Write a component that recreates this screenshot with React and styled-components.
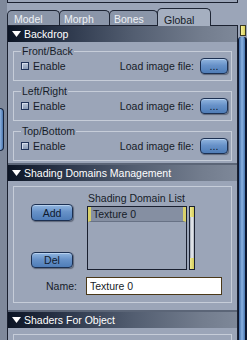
import React from "react";
import styled, { createGlobalStyle } from "styled-components";

const GlobalStyle = createGlobalStyle`
  html, body {
    margin: 0;
    padding: 0;
  }
  body {
    width: 247px;
    height: 340px;
    overflow: hidden;
    background: #9ba5b8;
    font-family: "Liberation Sans", Arial, sans-serif;
    font-size: 10.5px;
    color: #161c28;
  }
`;

const Window = styled.div`
  display: flex;
  width: 247px;
  height: 340px;
  overflow: hidden;
`;

const LeftStrip = styled.div`
  width: 7px;
  flex: none;
  background: #7f899b;
  display: flex;
  flex-direction: column;
`;

const SideHandle = styled.div`
  margin-top: 108px;
  width: 3px;
  height: 41px;
  background: linear-gradient(to right, #8fb3e0, #4a76ae);
  border: 1px solid #15233d;
  border-left: none;
  border-radius: 0 4px 4px 0;
`;

const Main = styled.div`
  flex: 1;
  min-width: 0;
  display: flex;
  flex-direction: column;
`;

const TopStrip = styled.div`
  width: 229px;
  height: 2px;
  flex: none;
  border: 1px solid #1b2130;
  border-top: none;
`;

const TabRow = styled.div`
  height: 22px;
  flex: none;
  display: flex;
  align-items: flex-end;
`;

const Tab = styled.div`
  box-sizing: border-box;
  width: ${(p) => p.$w}px;
  height: ${(p) => (p.$active ? 18 : 15)}px;
  margin-bottom: ${(p) => (p.$active ? -1 : 0)}px;
  margin-left: ${(p) => (p.$first ? 0 : -1)}px;
  padding: ${(p) => (p.$active ? 5 : 2)}px 0 0 ${(p) => p.$pad}px;
  line-height: 12px;
  border: 1px solid #1e2534;
  border-bottom: none;
  border-radius: 5px 5px 0 0;
  background: ${(p) => (p.$active ? "#a5afc0" : "#8b96a9")};
  color: ${(p) => (p.$active ? "#151b26" : "#eef1f5")};
  position: relative;
  z-index: ${(p) => (p.$active ? 2 : 1)};
`;

const Body = styled.div`
  flex: 1;
  display: flex;
  min-height: 0;
`;

const Panel = styled.div`
  width: 231px;
  flex: none;
  box-sizing: border-box;
  border: 1px solid #1b2130;
  border-bottom: none;
  display: flex;
  flex-direction: column;
`;

const SectionHeader = styled.div`
  height: 16px;
  flex: none;
  display: flex;
  align-items: center;
  padding-left: 4px;
  gap: 3px;
  border-top: ${(p) => (p.$divider ? "2px solid #5b6577" : "none")};
  background: linear-gradient(
    to right,
    #0c1525 0%,
    #2c374b 25%,
    #535e71 55%,
    #737d8e 85%,
    #7e8899 100%
  );
  color: #ffffff;
  white-space: nowrap;
`;

const SectionBody = styled.div`
  display: flex;
  flex-direction: column;
  gap: 4px;
  padding: ${(p) => p.$pad};
`;

const Fieldset = styled.fieldset`
  margin: 0;
  min-width: 0;
  padding: ${(p) => p.$pad || "1px 3px 6px 7px"};
  border: 1px solid #c6cdd9;
  ${(p) => (p.$open ? "height: 40px;" : "")}
`;

const Legend = styled.legend`
  padding: 0 1px;
  line-height: 12px;
  color: #161c28;
`;

const OptionRow = styled.div`
  display: flex;
  align-items: center;
  height: 16px;
`;

const CheckBox = styled.span`
  box-sizing: border-box;
  width: 8px;
  height: 8px;
  border: 1px solid #22345a;
  background: linear-gradient(#b9c5d8, #8d9db7);
  box-shadow: inset 1px 1px 0 #d4dceb;
`;

const Label = styled.span`
  margin-left: ${(p) => p.$ml || 0}px;
  line-height: 12px;
  white-space: nowrap;
`;

const BlueButton = styled.div`
  box-sizing: border-box;
  width: ${(p) => p.$w}px;
  height: ${(p) => p.$h}px;
  margin-left: ${(p) => p.$ml || 0}px;
  margin-top: ${(p) => p.$mt || 0}px;
  flex: none;
  display: flex;
  align-items: center;
  justify-content: center;
  border: 1px solid #1c3052;
  border-radius: 4px;
  background: linear-gradient(#92b6e0 0%, #6892c8 45%, #4f7db8 100%);
  box-shadow: 1px 1px 1px rgba(20, 28, 44, 0.45), inset 0 1px 0 #b6d0ee;
  color: #0f1a2e;
  line-height: 12px;
`;

const DomainRow = styled.div`
  display: flex;
`;

const ButtonColumn = styled.div`
  display: flex;
  flex-direction: column;
  padding-left: 17px;
  padding-top: 12px;
`;

const ListColumn = styled.div`
  display: flex;
  flex-direction: column;
  margin-left: 14px;
`;

const ListTitle = styled.div`
  margin-left: 1px;
  height: 12px;
  line-height: 12px;
  margin-bottom: 2px;
  white-space: nowrap;
`;

const ListWrap = styled.div`
  display: flex;
  gap: 2px;
`;

const ListBox = styled.div`
  box-sizing: border-box;
  width: 100px;
  height: 64px;
  border: 1px solid #1a2030;
  background: #9ba5b8;
`;

const ListItem = styled.div`
  box-sizing: border-box;
  height: 15px;
  display: flex;
  align-items: center;
  background: #858fa2;
  border-left: 3px solid #d8d06a;
  border-right: 3px solid #d8d06a;
  border-bottom: 1px solid #687285;
  padding-left: 2px;
  line-height: 12px;
`;

const ListScroll = styled.div`
  box-sizing: border-box;
  width: 6px;
  height: 64px;
  display: flex;
  flex-direction: column;
  border: 1px solid #1a2030;
`;

const ScrollCap = styled.div`
  height: ${(p) => p.$h}px;
  flex: none;
  background: linear-gradient(to right, #f2ec92, #d3ca58);
`;

const ScrollTrack = styled.div`
  flex: 1;
  background: linear-gradient(to right, #9ea6b2, #f1f3f6 50%, #a9b0bb);
`;

const NameRow = styled.div`
  display: flex;
  align-items: center;
  margin-top: 7px;
`;

const NameInput = styled.input`
  box-sizing: border-box;
  width: 136px;
  height: 18px;
  margin: 0 0 0 9px;
  padding: 0 0 0 3px;
  border: 1px solid #4a3818;
  background: #ffffff;
  font-family: "Liberation Sans", Arial, sans-serif;
  font-size: 10.5px;
  color: #161c28;
  outline: none;
`;

const RightRail = styled.div`
  width: 9px;
  flex: none;
  display: flex;
  flex-direction: column;
`;

const RailThumb = styled.div`
  box-sizing: border-box;
  width: 6px;
  height: 11px;
  margin-left: 2px;
  border: 1px solid #3a3920;
  background: linear-gradient(to right, #f6f09a, #d8ce5a);
`;

const RailTrack = styled.div`
  flex: 1;
  margin-top: 1px;
  border-left: 1px solid #0b1630;
  border-right: 2px solid #0b1630;
  border-radius: 3px 3px 0 0;
  background: linear-gradient(to right, #3e6aa4, #8ab2e2 50%, #4775b0);
`;

function Caret() {
  return (
    <svg width="9" height="6" viewBox="0 0 9 6">
      <polygon points="0,0 9,0 4.5,6" fill="#ffffff" />
    </svg>
  );
}

function BackdropGroup({ title }) {
  return (
    <Fieldset>
      <Legend>{title}</Legend>
      <OptionRow>
        <CheckBox />
        <Label $ml={4}>Enable</Label>
        <Label style={{ marginLeft: "auto" }}>Load image file:</Label>
        <BlueButton $w={28} $h={16} $ml={6}>...</BlueButton>
      </OptionRow>
    </Fieldset>
  );
}

const tabs = [
  { name: "Model", w: 53, pad: 6 },
  { name: "Morph", w: 51, pad: 4 },
  { name: "Bones", w: 49, pad: 4 },
  { name: "Global", w: 54, pad: 6, active: true },
];

export default function App() {
  return (
    <Window>
      <GlobalStyle />
      <LeftStrip>
        <SideHandle />
      </LeftStrip>
      <Main>
        <TopStrip />
        <TabRow>
          {tabs.map((t, i) => (
            <Tab key={t.name} $w={t.w} $pad={t.pad} $active={t.active} $first={i === 0}>
              {t.name}
            </Tab>
          ))}
        </TabRow>
        <Body>
          <Panel>
            <SectionHeader>
              <Caret />
              Backdrop
            </SectionHeader>
            <SectionBody $pad="3px 5px 2px">
              <BackdropGroup title="Front/Back" />
              <BackdropGroup title="Left/Right" />
              <BackdropGroup title="Top/Bottom" />
            </SectionBody>

            <SectionHeader $divider>
              <Caret />
              Shading Domains Management
            </SectionHeader>
            <SectionBody $pad="5px 5px 7px">
              <Fieldset $pad="5px 0 7px 0">
                <DomainRow>
                  <ButtonColumn>
                    <BlueButton $w={42} $h={17}>Add</BlueButton>
                    <BlueButton $w={42} $h={16} $mt={31}>Del</BlueButton>
                  </ButtonColumn>
                  <ListColumn>
                    <ListTitle>Shading Domain List</ListTitle>
                    <ListWrap>
                      <ListBox>
                        <ListItem>Texture 0</ListItem>
                      </ListBox>
                      <ListScroll>
                        <ScrollCap $h={10} />
                        <ScrollTrack />
                        <ScrollCap $h={11} />
                      </ListScroll>
                    </ListWrap>
                  </ListColumn>
                </DomainRow>
                <NameRow>
                  <Label $ml={32}>Name:</Label>
                  <NameInput readOnly value="Texture 0" />
                </NameRow>
              </Fieldset>
            </SectionBody>

            <SectionHeader $divider>
              <Caret />
              Shaders For Object
            </SectionHeader>
            <SectionBody $pad="6px 5px 0">
              <Fieldset $pad="0" $open />
            </SectionBody>
          </Panel>
          <RightRail>
            <RailThumb />
            <RailTrack />
          </RightRail>
        </Body>
      </Main>
    </Window>
  );
}
